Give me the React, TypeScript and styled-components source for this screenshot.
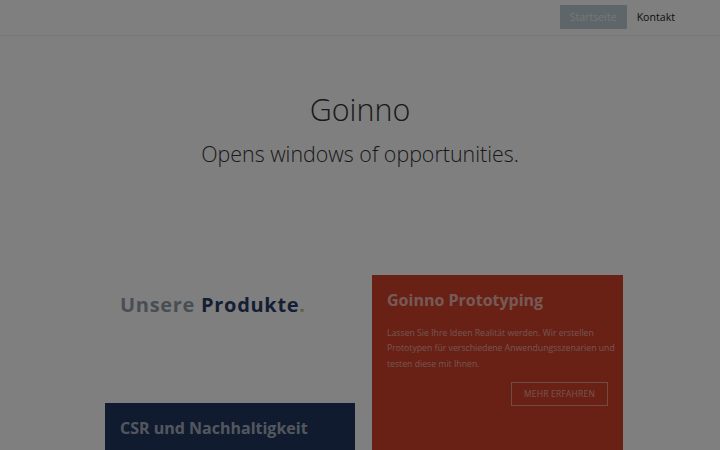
import React, { FC } from "react";
import styled, { createGlobalStyle } from "styled-components";

const GlobalStyle = createGlobalStyle`
	html, body {
		margin: 0;
		padding: 0;
		background: #fff;
		font-family: "Open Sans", "Liberation Sans", sans-serif;
	}
	* {
		box-sizing: border-box;
	}
`;

const Page = styled.div`
	width: 720px;
	height: 450px;
	overflow: hidden;
	background: #fff;
`;

/* dark layer that dims the whole page */
const Dimmer = styled.div`
	position: fixed;
	inset: 0;
	background: rgba(0, 0, 0, 0.5);
	pointer-events: none;
`;

const Header = styled.header`
	height: 36px;
	display: flex;
	justify-content: flex-end;
	align-items: flex-start;
	padding: 5px 35px 0 0;
	border-bottom: 1px solid #eee;
`;

const NavLink = styled.a<{ $active?: boolean }>`
	display: flex;
	align-items: center;
	height: 24px;
	padding: 0 10px;
	font-size: 10.6px;
	color: ${({ $active }) => ($active ? "rgba(255,255,255,0.7)" : "#222")};
	background: ${({ $active }) => ($active ? "#bccdd2" : "transparent")};
	text-decoration: none;
`;

const Hero = styled.section`
	display: flex;
	flex-direction: column;
	align-items: center;
	padding-top: 51px;
	height: 239px;
	color: #333;
	font-weight: 300;

	h1 {
		margin: 0;
		font-size: 30.5px;
		font-weight: 300;
		line-height: 44px;
	}

	p {
		margin: 8px 0 0;
		font-size: 21.4px;
		line-height: 30px;
	}
`;

const Grid = styled.div`
	display: grid;
	grid-template-columns: 250px 251px;
	column-gap: 17px;
	padding-left: 105px;
`;

const Column = styled.div`
	display: flex;
	flex-direction: column;
`;

const Intro = styled.div`
	height: 128px;
	padding: 16px 15px 0;

	h2 {
		margin: 0;
		font-size: 20px;
		font-weight: 700;
		letter-spacing: 0.7px;
		line-height: 27px;
	}

	.muted {
		color: #909ca8;
	}
	.strong {
		color: #2c3c68;
	}
	.dot {
		color: #c5c36a;
	}
`;

const Card = styled.div<{ $bg: string }>`
	background: ${({ $bg }) => $bg};
	padding: 13px 15px 20px;
	min-height: 180px;

	h3 {
		margin: 0;
		font-size: 16px;
		font-weight: 700;
		line-height: 25px;
		color: rgba(255, 255, 255, 0.62);
	}

	p {
		margin: 13px 0 0;
		font-size: 8.7px;
		line-height: 15.4px;
		white-space: nowrap;
		color: rgba(255, 255, 255, 0.55);
	}
`;

const MoreButton = styled.a`
	display: block;
	width: fit-content;
	margin: 10px 0 0 auto;
	padding: 0 12px;
	height: 24px;
	line-height: 22px;
	border: 1px solid rgba(255, 255, 255, 0.45);
	font-size: 8.5px;
	letter-spacing: 0.2px;
	text-transform: uppercase;
	color: rgba(255, 255, 255, 0.55);
	text-decoration: none;
`;

const App: FC = () => (
	<Page>
		<GlobalStyle />
		<Header>
			<NavLink $active>Startseite</NavLink>
			<NavLink>Kontakt</NavLink>
		</Header>
		<Hero>
			<h1>Goinno</h1>
			<p>Opens windows of opportunities.</p>
		</Hero>
		<Grid>
			<Column>
				<Intro>
					<h2>
						<span className="muted">Unsere </span>
						<span className="strong">Produkte</span>
						<span className="dot">.</span>
					</h2>
				</Intro>
				<Card $bg="#22365e">
					<h3>CSR und Nachhaltigkeit</h3>
				</Card>
			</Column>
			<Column>
				<Card $bg="#d2432d">
					<h3>Goinno Prototyping</h3>
					<p>
						Lassen Sie Ihre Ideen Realität werden. Wir erstellen
						<br />
						Prototypen für verschiedene Anwendungsszenarien und
						<br />
						testen diese mit Ihnen.
					</p>
					<MoreButton>Mehr erfahren</MoreButton>
				</Card>
			</Column>
		</Grid>
		<Dimmer />
	</Page>
);

export default App;
